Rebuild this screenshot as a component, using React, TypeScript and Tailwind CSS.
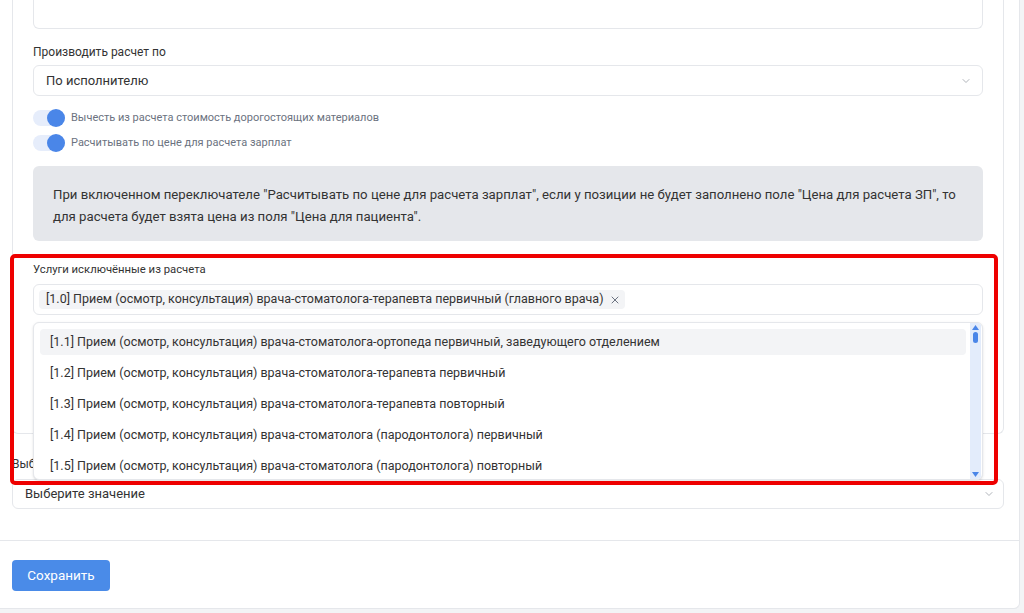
import React from "react";
import { ChevronDown, X } from "lucide-react";

const items = [
  "[1.1] Прием (осмотр, консультация) врача-стоматолога-ортопеда первичный, заведующего отделением",
  "[1.2] Прием (осмотр, консультация) врача-стоматолога-терапевта первичный",
  "[1.3] Прием (осмотр, консультация) врача-стоматолога-терапевта повторный",
  "[1.4] Прием (осмотр, консультация) врача-стоматолога (пародонтолога) первичный",
  "[1.5] Прием (осмотр, консультация) врача-стоматолога (пародонтолога) повторный",
  "[1.6] Прием (осмотр, консультация) врача-стоматолога-хирурга первичный",
];

function Toggle({ label }: { label: string }) {
  return (
    <div className="flex items-center h-4 gap-[6px]">
      <div className="relative w-[32px] h-[16px] rounded-full bg-[#e6edfb]">
        <div className="absolute right-0 top-[-1px] w-[18px] h-[18px] rounded-full bg-[#4a86e8]" />
      </div>
      <span className="text-[11px] text-[#6b7280]">{label}</span>
    </div>
  );
}

export default function App() {
  return (
    <div
      className="min-h-screen bg-[#f3f4f6] pb-[5px] pr-[4px]"
      style={{ fontFamily: "Roboto, 'Noto Sans', sans-serif" }}
    >
      <div className="relative bg-white border-r border-b border-[#e5e7eb] rounded-br-md text-[#333]">
        {/* inner section */}
        <div className="ml-3 mr-[15px] border-x border-b border-[#e5e7eb] rounded-b-md px-5 pb-[118px]">
          <div className="h-[29px] border-x border-b border-[#e5e7eb] rounded-b-md" />
          <div className="mt-[15px] h-4 text-[12px] leading-4 text-[#333]">Производить расчет по</div>
          <div className="mt-[5px] h-[31px] border border-[#e5e7eb] rounded-md flex items-center justify-between pl-[12px] pr-[10px]">
            <span className="text-[13px]">По исполнителю</span>
            <ChevronDown size={12} className="text-[#b0b4ba]" />
          </div>
          <div className="mt-[14px]">
            <Toggle label="Вычесть из расчета стоимость дорогостоящих материалов" />
          </div>
          <div className="mt-[9px]">
            <Toggle label="Расчитывать по цене для расчета зарплат" />
          </div>
          <div className="mt-[15px] bg-[#e5e7eb] rounded-md pl-5 pr-[12px] pt-[18px] pb-[13px] text-[13.2px] leading-[22px] text-[#333]">
            При включенном переключателе "Расчитывать по цене для расчета зарплат", если у позиции не будет заполнено поле "Цена для расчета ЗП", то для расчета будет взята цена из поля "Цена для пациента".
          </div>
          <div className="mt-[21px] h-4 text-[11.3px] leading-4 text-[#333]">Услуги исключённые из расчета</div>
          <div className="relative mt-[6px] h-[31px] border border-[#e5e7eb] rounded-md flex items-center pl-[5px]">
            <div className="h-[19px] bg-[#f3f4f6] rounded flex items-center pl-[7px] pr-[4px] gap-[5px] text-[12.5px] text-[#333]">
              <span>[1.0] Прием (осмотр, консультация) врача-стоматолога-терапевта первичный (главного врача)</span>
              <X size={12} className="text-[#6b7280]" />
            </div>
            {/* dropdown */}
            <div className="absolute left-[-1px] right-[-1px] top-[37px] h-[158px] bg-white border border-[#e5e7eb] rounded-md shadow-sm overflow-hidden z-10 flex">
              <div className="flex-1 pt-[6px] pl-[6px] pr-[4px] flex flex-col gap-[5px]">
                {items.map((t, i) => (
                  <div
                    key={i}
                    className={`h-[26px] shrink-0 flex items-center pl-[10px] rounded text-[12.5px] whitespace-nowrap ${i === 0 ? "bg-[#f3f4f6]" : ""}`}
                  >
                    {t}
                  </div>
                ))}
              </div>
              <div className="w-[11px] mr-[1px] bg-[#e3ecfb] flex flex-col items-center justify-between py-[2px]">
                <div className="flex flex-col items-center gap-[2px]">
                  <svg width="7" height="5" viewBox="0 0 7 5">
                    <path d="M3.5 0 L7 5 L0 5 Z" fill="#4a86e8" />
                  </svg>
                  <div className="w-[5px] h-[11px] rounded-full bg-[#4a86e8]" />
                </div>
                <svg width="7" height="5" viewBox="0 0 7 5">
                  <path d="M0 0 L7 0 L3.5 5 Z" fill="#4a86e8" />
                </svg>
              </div>
            </div>
          </div>
        </div>

        {/* second field */}
        <div className="ml-3 mr-[15px]">
          <div className="mt-[22px] h-4 text-[12px] leading-4 text-[#333]">Выберите услуги</div>
          <div className="mt-[7px] h-[30px] border border-[#e5e7eb] rounded-md flex items-center justify-between pl-[12px] pr-[8px]">
            <span className="text-[13px]">Выберите значение</span>
            <ChevronDown size={12} className="text-[#b0b4ba]" />
          </div>
        </div>

        <div className="mt-[31px] border-t border-[#e5e7eb] pt-[19px] pb-[17px] px-3">
          <button className="h-[31px] w-[98px] rounded bg-[#4a8be8] text-white text-[13.5px]">Сохранить</button>
        </div>

        {/* red highlight annotation */}
        <div className="absolute left-[10px] top-[254px] w-[988px] h-[231px] border-4 border-[#ee0000] rounded-[5px] pointer-events-none z-20" />
      </div>
    </div>
  );
}
